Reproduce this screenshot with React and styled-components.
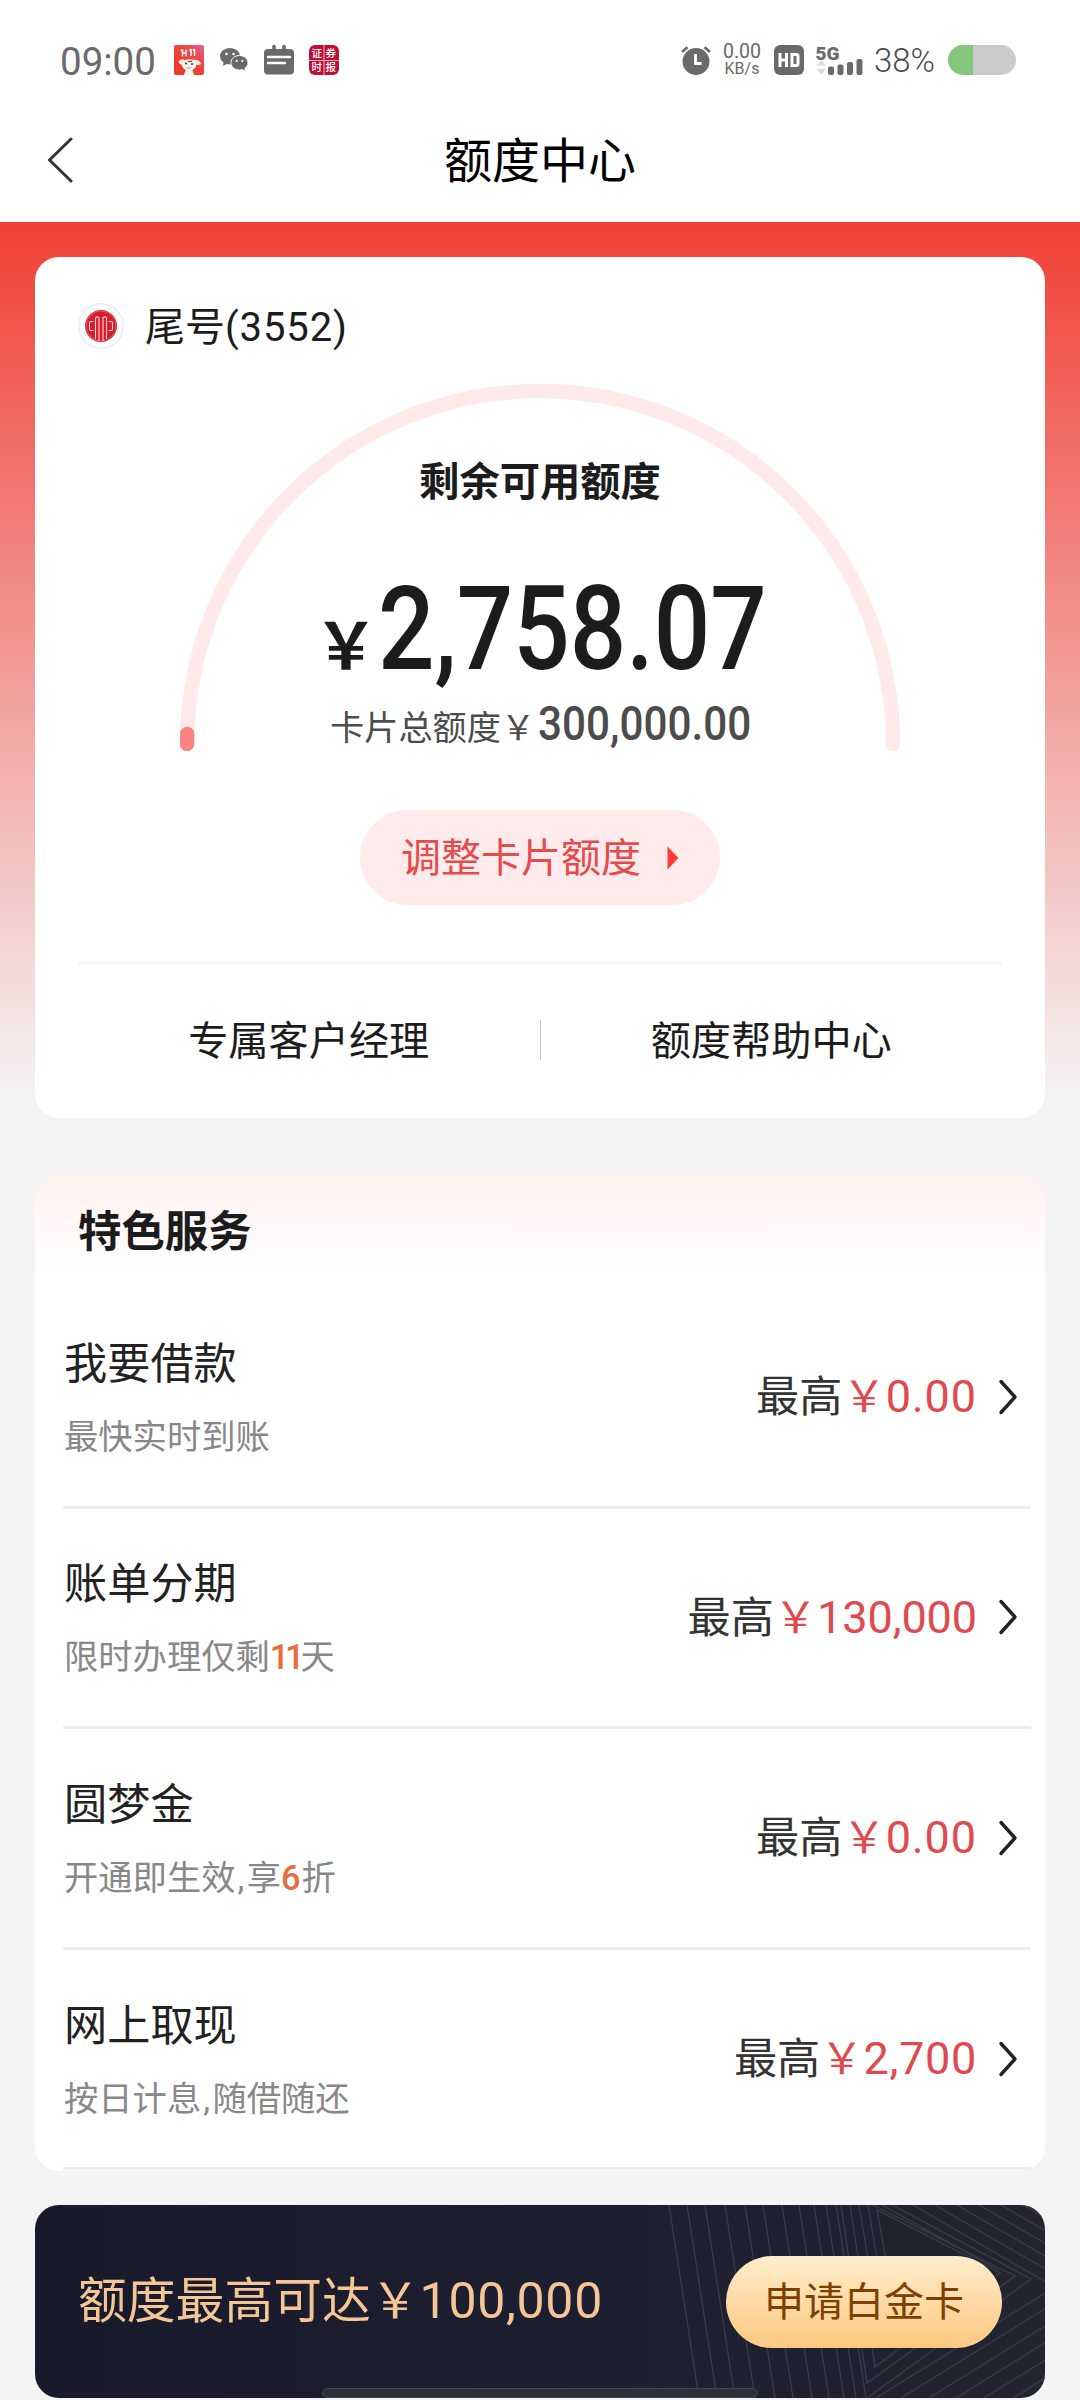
import React from "react";
import styled, { createGlobalStyle } from "styled-components";

const GlobalStyle = createGlobalStyle`
  * { box-sizing: border-box; }
  body {
    margin: 0;
    background: #f4f4f4;
    font-family: Roboto, "Noto Sans CJK SC", sans-serif;
    color: #1c1c1c;
  }
`;

const Page = styled.div`
  width: 1080px;
  height: 2400px;
  overflow: hidden;
  display: flex;
  flex-direction: column;
  background: #f4f4f4;
`;

/* ---------- status bar ---------- */

const StatusBar = styled.div`
  flex: none;
  height: 98px;
  padding: 22px 64px 0 60px;
  display: flex;
  align-items: center;
  justify-content: space-between;
  background: #fff;
  color: #6a6a6a;
`;

const StatusGroup = styled.div`
  display: flex;
  align-items: center;
  height: 76px;
`;

const Clock = styled.span`
  width: 114px;
  font-size: 38.5px;
  line-height: 44px;
  padding-top: 4px;
`;

const StatusIcon = styled.svg`
  display: block;
  flex: none;
  overflow: visible;
  width: ${(p) => p.$w}px;
  height: 30px;
  margin-right: ${(p) => p.$gap}px;
`;

const NetSpeed = styled.div`
  width: 40px;
  margin-right: 12px;
  display: flex;
  flex-direction: column;
  align-items: center;
  font-size: 19.5px;
  line-height: 18px;
`;

const SpeedUnit = styled.span`
  font-size: 16px;
  line-height: 16px;
`;

const Percent = styled.span`
  width: 74px;
  font-size: 33px;
  line-height: 40px;
  font-weight: 300;
  padding-top: 2px;
  color: #4c4c4c;
`;

const Battery = styled.div`
  width: 68px;
  height: 30px;
  border-radius: 15px;
  background: linear-gradient(90deg, #84c57c 36.5%, #cbcbcb 36.5%);
`;

/* ---------- navigation ---------- */

const NavBar = styled.header`
  flex: none;
  height: 124px;
  padding: 0 46px;
  display: grid;
  grid-template-columns: 28px 1fr 28px;
  align-items: center;
  background: #fff;
`;

const NavTitle = styled.h1`
  margin: 0;
  font-size: 48px;
  line-height: 60px;
  font-weight: 400;
  text-align: center;
  color: #000;
  padding-top: 4px;
`;

/* ---------- content ---------- */

const Content = styled.main`
  flex: 1;
  display: flex;
  flex-direction: column;
  padding: 35px 35px 0;
  background: linear-gradient(#f04036, #f4f4f4 878px);
`;

const QuotaCard = styled.section`
  flex: none;
  height: 861px;
  padding: 46px 43px 0;
  border-radius: 24px;
  background: #fff;
  display: flex;
  flex-direction: column;
`;

const AccountRow = styled.div`
  display: flex;
  align-items: center;
  gap: 21px;
  height: 46px;
  font-size: 40px;
  line-height: 46px;
`;

const AccountName = styled.span`
  padding-top: 3px;
`;

const AccountDigits = styled.span`
  letter-spacing: 0.9px;
`;

const BankBadge = styled.svg`
  width: 46px;
  height: 46px;
`;

const Gauge = styled.div`
  display: grid;
  width: 720px;
  height: 367px;
  margin: 35px auto 0;
`;

const GaugeArc = styled.svg`
  grid-area: 1 / 1;
  width: 720px;
  height: 367px;
`;

const GaugeBody = styled.div`
  grid-area: 1 / 1;
  display: flex;
  flex-direction: column;
  align-items: center;
  padding-top: 69px;
`;

const GaugeTitle = styled.div`
  font-size: 40.3px;
  line-height: 60px;
  font-weight: 700;
`;

const AmountRow = styled.div`
  display: flex;
  align-items: baseline;
  width: 452px;
  height: 120px;
  margin-top: 56px;
`;

const AmountYen = styled.span`
  flex: none;
  width: 64px;
  font-size: 64px;
  font-weight: 700;
  line-height: 120px;
`;

const Amount = styled.span`
  width: 388px;
  font-size: 116px;
  line-height: 120px;
  font-weight: 500;
  white-space: nowrap;
  transform: scaleX(0.857);
  transform-origin: 0 50%;
`;

const TotalRow = styled.div`
  display: flex;
  align-items: baseline;
  width: 420px;
  height: 60px;
  margin-top: 5px;
  color: #4c4c4c;
  font-size: 34.2px;
  line-height: 60px;
  white-space: nowrap;
`;

const TotalLabel = styled.span`
  flex: none;
  width: 208px;
`;

const TotalValue = styled.span`
  width: 212px;
  font-size: 48px;
  line-height: 60px;
  font-weight: 500;
  transform: scaleX(0.88);
  transform-origin: 0 50%;
`;

const AdjustButton = styled.button`
  flex: none;
  align-self: center;
  width: 360px;
  height: 95px;
  margin-top: 59px;
  padding: 0 41px;
  border: 0;
  border-radius: 48px;
  background: #ffebec;
  color: #e54a4c;
  font: inherit;
  font-size: 40px;
  display: flex;
  align-items: center;
  justify-content: space-between;
`;

const ButtonLabel = styled.span`
  padding-bottom: 5px;
`;

const Separator = styled.div`
  flex: none;
  height: 3px;
  margin-top: 57px;
  background: #f7f7f7;
`;

const LinkRow = styled.div`
  flex: 1;
  display: grid;
  grid-template-columns: 1fr 1px 1fr;
  align-items: center;
  justify-items: center;
  padding-bottom: 3px;
  font-size: 40.2px;
`;

const LinkDivider = styled.div`
  width: 1px;
  height: 40px;
  background: #c8c8c8;
`;

/* ---------- services ---------- */

const ServiceCard = styled.section`
  flex: none;
  height: 996px;
  margin-top: 57px;
  border-radius: 24px;
  background: linear-gradient(#fff1f0, #fff 95px);
`;

const ServiceHeading = styled.h2`
  margin: 0;
  height: 113px;
  padding-left: 43px;
  font-size: 43.4px;
  line-height: 115px;
  font-weight: 700;
`;

const ServiceItem = styled.div`
  height: 220.6px;
  margin: 0 14px 0 28px;
  padding-right: 13px;
  border-bottom: 3px solid #eeeeee;
  display: flex;
  align-items: center;
`;

const ServiceInfo = styled.div`
  flex: 1;
  height: 127px;
  padding-left: 1px;
  margin-top: 3px;
  display: flex;
  flex-direction: column;
  justify-content: space-between;
`;

const ServiceName = styled.div`
  font-size: 43.2px;
  line-height: 60px;
  color: #222;
`;

const ServiceNote = styled.div`
  font-size: 34.3px;
  line-height: 50px;
  color: #888;
`;

const Comma = styled.span`
  padding-left: 2px;
  letter-spacing: 2.5px;
`;

const Highlight = styled.span`
  color: #e86c3e;
  font-weight: 500;
  letter-spacing: ${(p) => p.$track}px;
`;

const ServiceLimit = styled.div`
  display: flex;
  align-items: baseline;
  margin-right: 21px;
  padding-top: 2px;
  font-size: 43.2px;
  line-height: 60px;
  color: #333;
`;

const LimitValue = styled.span`
  display: inline-flex;
  align-items: baseline;
  color: #e04a4e;
`;

const Digits = styled.span`
  font-size: 45px;
  letter-spacing: ${(p) => p.$track}px;
`;

/* ---------- banner ---------- */

const Banner = styled.section`
  flex: none;
  position: relative;
  height: 193px;
  margin-top: 34px;
  padding: 0 43px;
  border-radius: 24px;
  overflow: hidden;
  background: linear-gradient(90deg, #18192b, #1d1e2f 50%, #232431);
  display: flex;
  align-items: center;
  justify-content: space-between;
`;

const BannerLines = styled.svg`
  position: absolute;
  top: 0;
  right: 0;
  width: 400px;
  height: 193px;
`;

const BannerText = styled.div`
  display: flex;
  align-items: baseline;
  font-size: 48.8px;
  line-height: 60px;
  color: #f4c695;
`;

const BannerDigits = styled.span`
  font-size: 50px;
  letter-spacing: 0.7px;
`;

const ApplyButton = styled.button`
  position: relative;
  width: 276px;
  height: 92px;
  padding: 0;
  border: 0;
  border-radius: 46px;
  background: linear-gradient(#feedcb, #ffc880);
  color: #7e4000;
  font: inherit;
  font-size: 40px;
  display: flex;
  align-items: center;
  justify-content: center;
`;

const HomeIndicator = styled.div`
  position: absolute;
  left: 287px;
  bottom: 0;
  width: 436px;
  height: 10px;
  border-radius: 5px;
  border: 1px solid #42434e;
  background: #2e2f39;
`;

const SERVICES = [
  { name: "我要借款", note: ["最快实时到账"], value: "0.00", track: 0.9 },
  { name: "账单分期", note: ["限时办理仅剩", "11", "天"], value: "130,000", track: -0.1, markTrack: -4.2 },
  { name: "圆梦金", note: ["开通即生效,享", "6", "折"], value: "0.00", track: 0.9, markTrack: 1 },
  { name: "网上取现", note: ["按日计息,随借随还"], value: "2,700", track: 0.7 },
];

function ShopIcon() {
  return (
    <StatusIcon $w={30} $gap={16} viewBox="0 0 30 30">
      <defs>
        <linearGradient id="shop" x1="1" y1="0" x2="0.3" y2="0.8">
          <stop offset="0" stopColor="#d860a8" />
          <stop offset="0.4" stopColor="#f04a48" />
          <stop offset="1" stopColor="#ee3a2c" />
        </linearGradient>
      </defs>
      <rect width="30" height="30" rx="2" fill="url(#shop)" />
      <path d="M8.500 4.500v7M12 4.500v7M9 8h2.500M17 4v7M20.500 4v7M7 6l1.500-1.500M15.500 5.500L17 4M19 5.500L20.500 4" stroke="#fff" strokeWidth="1.500" fill="none" />
      <path d="M4.500 16.500c1.500-2.300 4.500-2.500 6.500-1.500 3-1 6-1 8.500 0 3-.6 6.500.2 7.500 4-2 1.500-3.600 1.200-4.600.8-.4 2.800-2.400 4.400-4 5.200l1.600 5H10l1.600-5C9.500 24 7.800 22 7.600 19.500 6 19.500 4.800 18.500 4.500 16.500z" fill="#fbf1ec" />
      <circle cx="12" cy="18.500" r="0.900" fill="#222" />
      <circle cx="18" cy="19" r="0.900" fill="#222" />
      <path d="M14 16.800l4-.6" stroke="#222" strokeWidth="0.900" />
      <path d="M12.500 22.300c1.500 1 3.500 1 5 0" stroke="#888" strokeWidth="0.800" fill="none" />
    </StatusIcon>
  );
}

function ChatIcon() {
  return (
    <StatusIcon $w={28} $gap={16} viewBox="0 0 28 30">
      <path d="M10 3C4.500 3 0 6.600 0 11.200c0 2.600 1.400 4.800 3.600 6.300L3 21l3.600-2c1.100.3 2.200.5 3.400.5 5.500 0 10-3.700 10-8.300S15.500 3 10 3z" fill="#6a6a6a" />
      <path d="M19.500 10.500c-4.800 0-8.600 3.200-8.600 7.300s3.800 7.200 8.600 7.200c1 0 2-.1 2.800-.4l3.200 1.700-.6-2.900c1.900-1.300 3.100-3.300 3.100-5.600 0-4.100-3.800-7.300-8.500-7.300z" fill="#6a6a6a" stroke="#fff" strokeWidth="1" />
      <circle cx="6.500" cy="9" r="1.300" fill="#fff" />
      <circle cx="13.500" cy="9" r="1.300" fill="#fff" />
      <circle cx="16.700" cy="16" r="1.100" fill="#fff" />
      <circle cx="22.300" cy="16" r="1.100" fill="#fff" />
    </StatusIcon>
  );
}

function NoteIcon() {
  return (
    <StatusIcon $w={30} $gap={15} viewBox="0 0 30 30">
      <rect x="0" y="4" width="30" height="25.500" rx="4" fill="#6a6a6a" />
      <path d="M10 1.500v5M20 1.500v5" stroke="#6a6a6a" strokeWidth="3.600" strokeLinecap="round" />
      <path d="M4 12h22M4 18h17" stroke="#fff" strokeWidth="2.400" strokeLinecap="round" />
    </StatusIcon>
  );
}

function NewsIcon() {
  return (
    <StatusIcon $w={30} $gap={0} viewBox="0 0 30 30">
      <rect width="30" height="30" rx="6" fill="#c00f35" />
      <path d="M15 0v30M0 15.500h30" stroke="#f3c9d2" strokeWidth="0.900" />
      <g fill="#fff" fontFamily="Noto Sans CJK SC" fontSize="10.500" fontWeight="500">
        <text x="2.500" y="12">证</text>
        <text x="16.500" y="12">券</text>
        <text x="2.500" y="26.200">时</text>
        <text x="16.500" y="26.200">报</text>
      </g>
    </StatusIcon>
  );
}

function AlarmIcon() {
  return (
    <StatusIcon $w={30} $gap={11} viewBox="0 0 30 30">
      <circle cx="15" cy="16.500" r="13.500" fill="#6a6a6a" />
      <path d="M1 7l5.500-4.800M29 7l-5.500-4.800" stroke="#6a6a6a" strokeWidth="2.600" />
      <path d="M14.500 9v9.500h6" stroke="#fff" strokeWidth="2.800" fill="none" />
    </StatusIcon>
  );
}

function HdIcon() {
  return (
    <StatusIcon $w={30} $gap={12} viewBox="0 0 30 30">
      <rect width="30" height="30" rx="6" fill="#6a6a6a" />
      <path d="M6 8v14M12.500 8v14M6 15h6.500M18 9.500h4.500q1.500 0 1.500 1.500v8q0 1.500-1.500 1.500h-4.500z" stroke="#fff" strokeWidth="3" fill="none" />
    </StatusIcon>
  );
}

function SignalIcon() {
  return (
    <StatusIcon $w={47} $gap={11} viewBox="0 0 47 30">
      <text x="-0.500" y="14.500" fontFamily="Roboto" fontSize="19" fontWeight="900" fill="#6a6a6a">5G</text>
      <path d="M0.500 20.500l4.800-5 4.800 5zM0.500 24l4.800 5.500 4.800-5.500z" fill="#dcdcdc" />
      <g fill="#6a6a6a">
        <rect x="12" y="21.500" width="6" height="8.500" rx="2" />
        <rect x="21.500" y="19.500" width="6" height="10.500" rx="2" />
        <rect x="31" y="17" width="6" height="13" rx="2" />
        <rect x="40.500" y="14" width="6" height="16" rx="2" />
      </g>
    </StatusIcon>
  );
}

function BankLogo() {
  return (
    <BankBadge viewBox="0 0 46 46">
      <circle cx="23" cy="23" r="22.300" fill="#fff" stroke="#ebebeb" strokeWidth="1.400" />
      <circle cx="23" cy="23" r="16" fill="#d81e2c" />
      <circle cx="23" cy="23" r="15" fill="none" stroke="#ee8288" strokeWidth="0.600" />
      <path
        d="M15.500 18.500h-2.500q-1.500 0-1.500 1.500v6q0 1.500 1.500 1.500h2.500M30.500 18.500h2.500q1.500 0 1.500 1.500v6q0 1.500-1.500 1.500h-2.500M17.500 36V16q0-2 2-2.500l1.500 1.500V38M28.500 36V16q0-2-2-2.500L25 15V38"
        fill="none"
        stroke="#f9d6d7"
        strokeWidth="1.100"
      />
    </BankBadge>
  );
}

const STEEP_LINES = [-16, 2, 20, 40, 60, 78, 97, 114, 129, 141, 151];
const TOP_STARTS = [228, 250, 272, 294, 316, 338];
const BOTTOM_STARTS = [191, 216, 244, 271, 299, 328];

function BannerPattern() {
  return (
    <BannerLines viewBox="-40 0 400 193">
      <g fill="none" stroke="#3a3b48" strokeWidth="1.300">
        {STEEP_LINES.map((x) => (
          <path key={x} d={`M${x} 0l30 193`} />
        ))}
        <path d="M165 0l25 162L315 68 192 5l9 50" />
        <path d="M156 0l26 178L330 71 188 0" />
        <path d="M174 0l10 60M183 0l10 60M182 193L346 74 207 0M197 0l118 66" />
        {TOP_STARTS.map((x) => (
          <path key={x} d={`M${x} 0L360 ${(360 - x) * 0.58}`} />
        ))}
        {BOTTOM_STARTS.map((x) => (
          <path key={x} d={`M${x} 193L360 ${193 - (360 - x) * 0.62}`} />
        ))}
      </g>
    </BannerLines>
  );
}

function NoteText({ text }) {
  const [head, tail] = text.split(",");
  if (tail === undefined) return head;
  return (
    <>
      {head}
      <Comma>,</Comma>
      {tail}
    </>
  );
}

function ServiceRow({ item }) {
  const [before, mark, after] = item.note;
  return (
    <ServiceItem>
      <ServiceInfo>
        <ServiceName>{item.name}</ServiceName>
        <ServiceNote>
          <NoteText text={before} />
          {mark && <Highlight $track={item.markTrack}>{mark}</Highlight>}
          {after}
        </ServiceNote>
      </ServiceInfo>
      <ServiceLimit>
        最高
        <LimitValue>
          ￥<Digits $track={item.track}>{item.value}</Digits>
        </LimitValue>
      </ServiceLimit>
      <svg width="20" height="36" viewBox="0 0 20 36">
        <path d="M3 2.500l14 15.500L3 33.500" fill="none" stroke="#222" strokeWidth="3.400" strokeLinecap="round" strokeLinejoin="round" />
      </svg>
    </ServiceItem>
  );
}

export default function App() {
  return (
    <Page>
      <GlobalStyle />
      <StatusBar>
        <StatusGroup>
          <Clock>09:00</Clock>
          <ShopIcon />
          <ChatIcon />
          <NoteIcon />
          <NewsIcon />
        </StatusGroup>
        <StatusGroup>
          <AlarmIcon />
          <NetSpeed>
            <span>0.00</span>
            <SpeedUnit>KB/s</SpeedUnit>
          </NetSpeed>
          <HdIcon />
          <SignalIcon />
          <Percent>38%</Percent>
          <Battery />
        </StatusGroup>
      </StatusBar>
      <NavBar>
        <svg width="28" height="46" viewBox="0 0 28 46">
          <path d="M25 2L3.500 23 25 44" fill="none" stroke="#333" strokeWidth="3" strokeLinecap="round" strokeLinejoin="round" />
        </svg>
        <NavTitle>额度中心</NavTitle>
      </NavBar>
      <Content>
        <QuotaCard>
          <AccountRow>
            <BankLogo />
            <AccountName>
              尾号<AccountDigits>(3552)</AccountDigits>
            </AccountName>
          </AccountRow>
          <Gauge>
            <GaugeArc viewBox="0 0 720 367">
              <path d="M7 360A353 353 0 0 1 713 360" fill="none" stroke="#ffe9ea" strokeWidth="14.400" strokeLinecap="round" />
              <path d="M7 360L7.200 350" fill="none" stroke="#f98380" strokeWidth="14.400" strokeLinecap="round" />
            </GaugeArc>
            <GaugeBody>
              <GaugeTitle>剩余可用额度</GaugeTitle>
              <AmountRow>
                <AmountYen>￥</AmountYen>
                <Amount>2,758.07</Amount>
              </AmountRow>
              <TotalRow>
                <TotalLabel>卡片总额度￥</TotalLabel>
                <TotalValue>300,000.00</TotalValue>
              </TotalRow>
            </GaugeBody>
          </Gauge>
          <AdjustButton>
            <ButtonLabel>调整卡片额度</ButtonLabel>
            <svg width="12" height="24" viewBox="0 0 12 24">
              <path d="M0.500 0.500L11.500 12L0.500 23.500z" fill="#ff3b35" />
            </svg>
          </AdjustButton>
          <Separator />
          <LinkRow>
            <ButtonLabel>专属客户经理</ButtonLabel>
            <LinkDivider />
            <ButtonLabel>额度帮助中心</ButtonLabel>
          </LinkRow>
        </QuotaCard>
        <ServiceCard>
          <ServiceHeading>特色服务</ServiceHeading>
          {SERVICES.map((item) => (
            <ServiceRow key={item.name} item={item} />
          ))}
        </ServiceCard>
        <Banner>
          <BannerPattern />
          <BannerText>
            额度最高可达￥
            <BannerDigits>100,000</BannerDigits>
          </BannerText>
          <ApplyButton>
            <ButtonLabel>申请白金卡</ButtonLabel>
          </ApplyButton>
          <HomeIndicator />
        </Banner>
      </Content>
    </Page>
  );
}
